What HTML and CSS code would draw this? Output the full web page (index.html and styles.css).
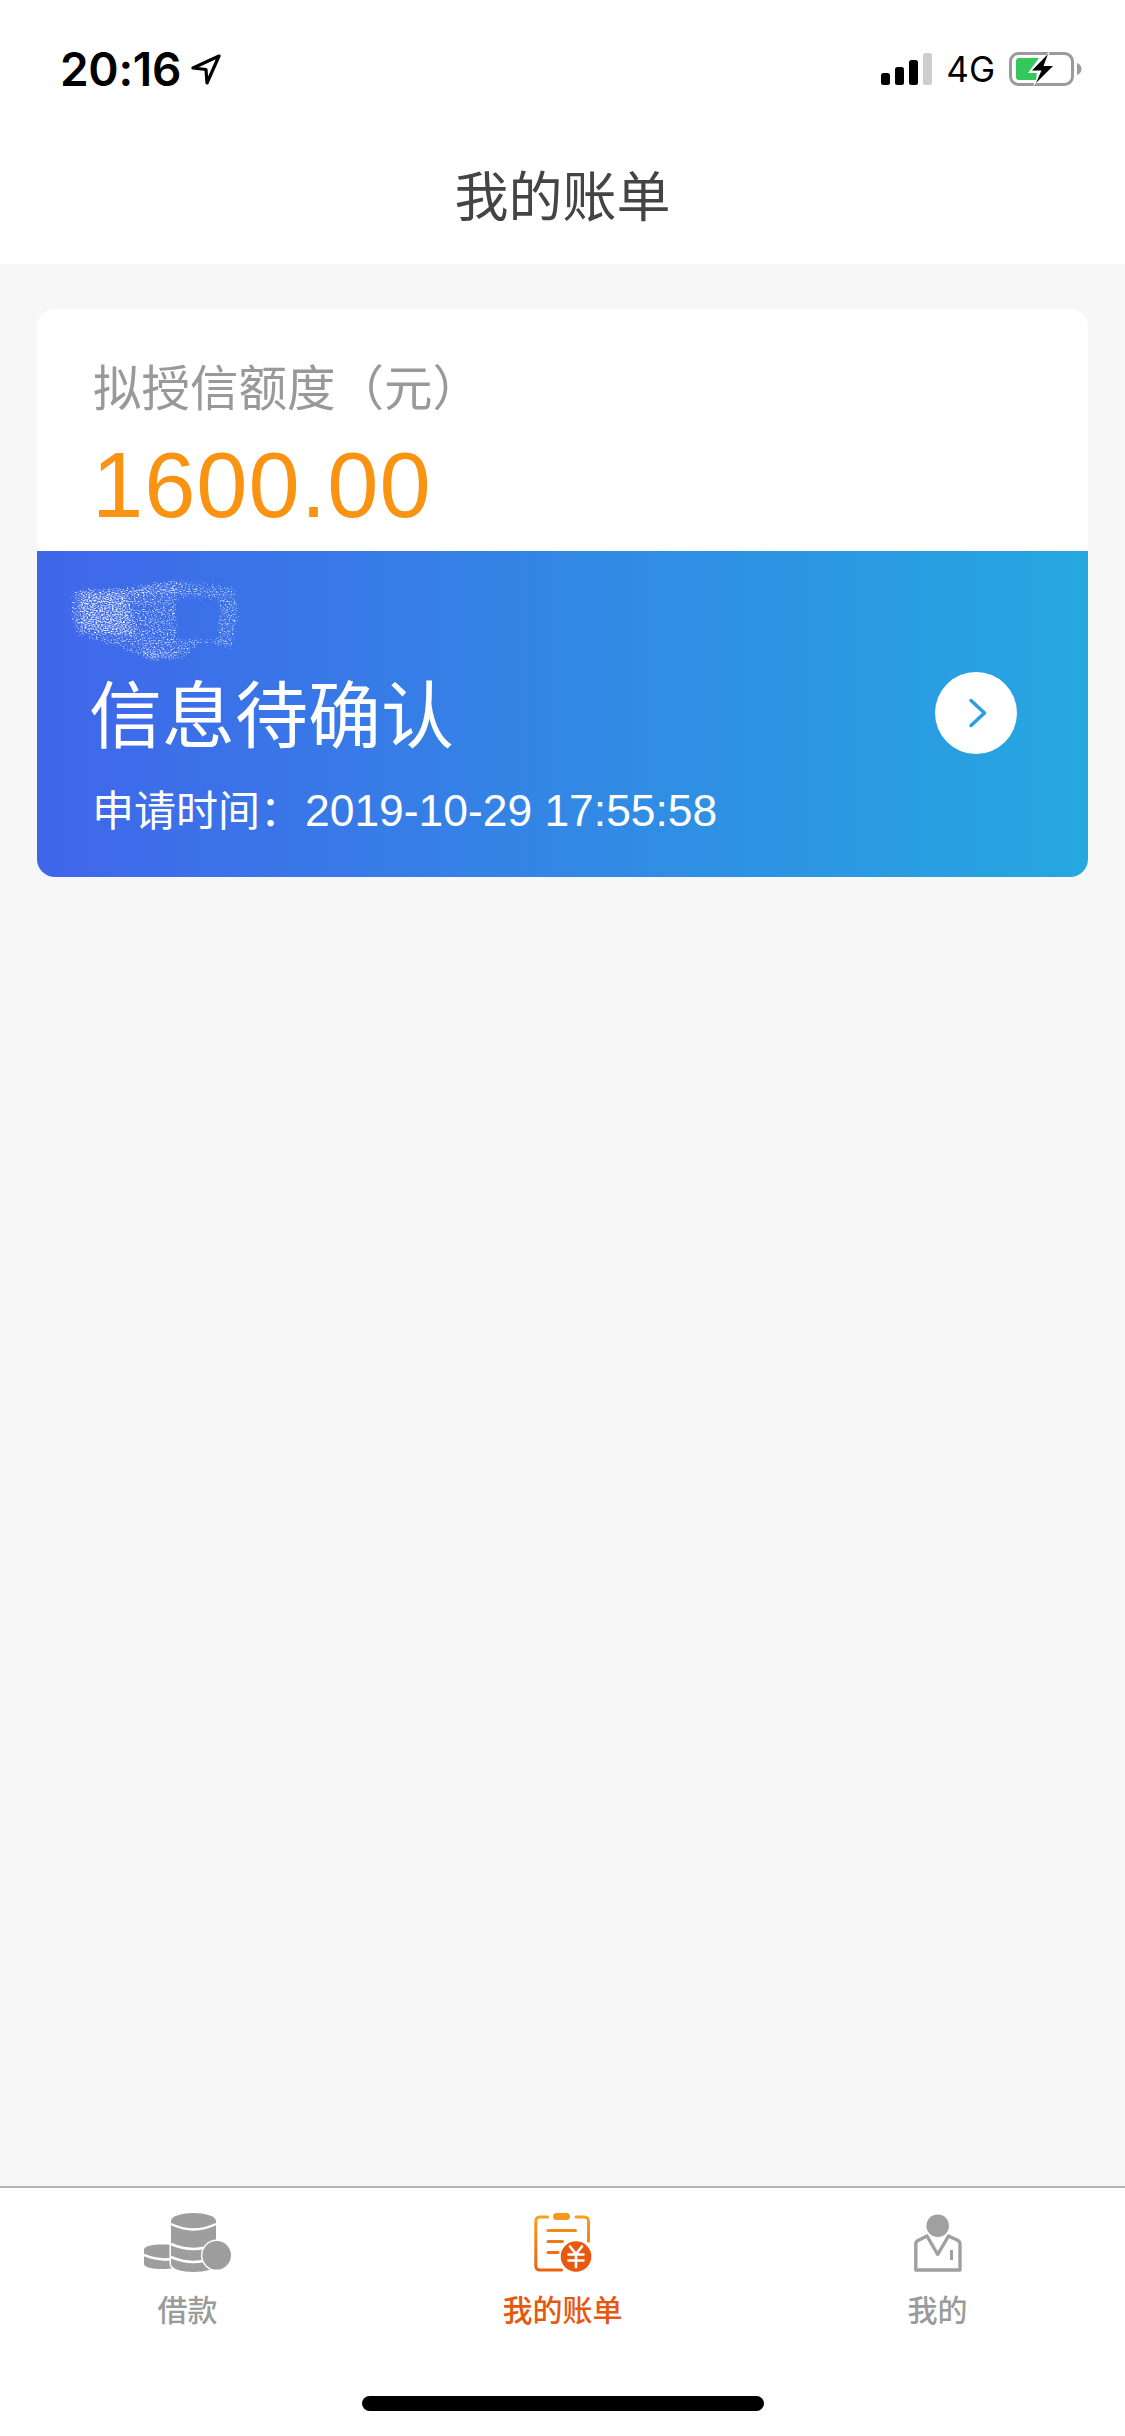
FILE: index.html
```html
<!DOCTYPE html>
<html lang="zh-CN">
<head>
<meta charset="utf-8">
<title>我的账单</title>
<link rel="stylesheet" href="styles.css">
</head>
<body>
<div class="app">
  <header class="top">
    <div class="status">
      <div class="status-left">
        <span class="clock">20:16</span>
        <svg class="loc" viewBox="0 0 30 32" width="30" height="32"><path d="M28 3 L2 15 L15 16.5 L16 30 Z" fill="none" stroke="#000" stroke-width="3.2" stroke-linejoin="round"/></svg>
      </div>
      <div class="status-right">
        <div class="signal"><i class="b1"></i><i class="b2"></i><i class="b3"></i><i class="b4"></i></div>
        <span class="net">4G</span>
        <svg class="battery" viewBox="0 0 73 34" width="73" height="34">
          <rect x="1.5" y="1.5" width="62" height="31" rx="8" fill="none" stroke="#9b9b9b" stroke-width="3"/>
          <path d="M68 11 C71 12 72.500 14.500 72.500 17 C72.500 19.500 71 22 68 23 Z" fill="#9b9b9b"/>
          <path d="M10 6 H30 L19 21 H27.500 V28 H10 A3 3 0 0 1 7 25 V9 A3 3 0 0 1 10 6 Z" fill="#34c759"/>
          <path d="M41 -1 L20 20 H30 L24 34 L47 13 H36 Z" fill="#fff"/>
          <path d="M39 2 L23 18.500 H32.500 L27 31 L44 14 H34.500 Z" fill="#000"/>
        </svg>
      </div>
    </div>
    <h1 class="title">我的账单</h1>
  </header>

  <main class="content">
    <section class="card">
      <div class="quota">
        <div class="quota-label">拟授信额度（元）</div>
        <div class="quota-value">1600.00</div>
      </div>
      <div class="state">
        <svg class="smudge" viewBox="0 0 175 86" width="175" height="86">
          <defs>
            <filter id="grain" x="0" y="0" width="100%" height="100%">
              <feGaussianBlur in="SourceGraphic" stdDeviation="2.5" result="mask"/>
              <feTurbulence type="fractalNoise" baseFrequency="0.55 0.9" numOctaves="3" seed="7" result="n"/>
              <feColorMatrix in="n" type="matrix" values="0 0 0 0 1  0 0 0 0 1  0 0 0 0 1  0 0 0 1 0" result="na"/>
              <feComposite in="na" in2="mask" operator="arithmetic" k1="0" k2="0.5" k3="0.5" k4="0" result="sum"/>
              <feColorMatrix in="sum" type="matrix" values="0 0 0 0 1  0 0 0 0 1  0 0 0 0 1  0 0 0 5 -2.7" result="g"/>
              <feGaussianBlur in="g" stdDeviation="0.4"/>
            </filter>
          </defs>
          <g filter="url(#grain)">
            <path fill-rule="evenodd" d="M4 10 L55 8 L105 1 L170 8 L174 38 L167 74 L135 68 L118 84 L80 85 L55 74 L8 60 L0 36 Z M112 24 L150 24 L148 60 L112 60 Z" fill="#fff" fill-opacity=".58"/>
            <path d="M12 16 L60 14 L64 40 L70 60 L12 52 Z" fill="#fff" fill-opacity=".3"/>
            <path d="M60 12 L108 5 L112 16 L66 20 Z" fill="#fff" fill-opacity=".2"/>
            <path d="M75 68 L105 76 L112 84 L78 84 Z" fill="#fff" fill-opacity=".2"/>
          </g>
        </svg>
        <div class="state-row">
          <div class="state-title">信息待确认</div>
          <div class="go">
            <svg viewBox="0 0 20 30" width="20" height="30"><path d="M3 2.500 L16.500 15 L3 27.500" fill="none" stroke="#2a9fdf" stroke-width="3.500" stroke-linecap="round" stroke-linejoin="round"/></svg>
          </div>
        </div>
        <div class="state-time"><span class="time-key">申请时间：</span><span class="time-val">2019-10-29 17:55:58</span></div>
      </div>
    </section>
  </main>

  <footer class="tabs">
    <nav class="tab-row">
      <a class="tab">
        <svg class="tab-icon" viewBox="0 0 88 59" width="88" height="59">
          <g fill="#9e9e9e">
            <path d="M0 37 C0 33 8 31.500 18 31.500 C28 31.500 36 33 36 37 V51 C36 54 28 56 18 56 C8 56 0 54 0 51 Z"/>
          </g>
          <path d="M0 42 Q14 48 27 46" fill="none" stroke="#fff" stroke-width="2.500"/>
          <path d="M27 8 C27 3 38 0 49.500 0 C61 0 72 3 72 8 V51 C72 56 61 59 49.500 59 C38 59 27 56 27 51 Z" fill="#9e9e9e" stroke="#fff" stroke-width="3" paint-order="stroke"/>
          <path d="M27 11 Q49.500 22 72 11 M27 31 Q49.500 41 72 31 M27 44 Q49.500 54 72 44" fill="none" stroke="#fff" stroke-width="2.500"/>
          <circle cx="72.700" cy="42.300" r="14.300" fill="#9e9e9e" stroke="#fff" stroke-width="3" paint-order="stroke"/>
        </svg>
        <span class="tab-label">借款</span>
      </a>
      <a class="tab tab-active">
        <svg class="tab-icon" viewBox="0 0 58 59" width="58" height="59">
          <defs>
            <linearGradient id="bill" x1="0" y1="0" x2="0" y2="1">
              <stop offset="0" stop-color="#f7a01b"/>
              <stop offset="1" stop-color="#e9610f"/>
            </linearGradient>
          </defs>
          <path d="M13.500 4 H6 Q1.800 4 1.800 8.500 V52.500 Q1.800 57 6 57 H27.500 M42 4 H50 Q54.500 4 54.500 8.500 V28" fill="none" stroke="url(#bill)" stroke-width="3" stroke-linecap="round" stroke-linejoin="round"/>
          <rect x="19" y="0" width="17" height="7" rx="3.500" fill="#f7981a"/>
          <path d="M14 17.500 H41.500" fill="none" stroke="#f08a1a" stroke-width="3" stroke-linecap="round"/>
          <path d="M14 28.500 H28.500" fill="none" stroke="#ee7c16" stroke-width="3" stroke-linecap="round"/>
          <path d="M14 39.500 H24" fill="none" stroke="#ec7113" stroke-width="3" stroke-linecap="round"/>
          <circle cx="42" cy="43.500" r="15.300" fill="#e8590f"/>
          <path d="M36 33.500 L42 41 L48 33.500 M34.500 41.500 H49.500 M34.500 47.500 H49.500 M42 41 V54" fill="none" stroke="#fff" stroke-width="2.600" stroke-linecap="round" stroke-linejoin="round"/>
        </svg>
        <span class="tab-label">我的账单</span>
      </a>
      <a class="tab">
        <svg class="tab-icon" viewBox="0 0 48 59" width="48" height="59">
          <circle cx="23.700" cy="12.700" r="11.300" fill="#a0a0a0"/>
          <path d="M13 23 L4 27.500 Q1.800 28.700 1.800 31 V57 H46 V31 Q46 28.700 44 27.500 L34.500 23 L23.700 41.500 Z" fill="none" stroke="#a0a0a0" stroke-width="3.400" stroke-linejoin="round"/>
          <path d="M37.500 37 V47" fill="none" stroke="#a0a0a0" stroke-width="3"/>
        </svg>
        <span class="tab-label">我的</span>
      </a>
    </nav>
    <div class="home-wrap"><div class="home"></div></div>
  </footer>
</div>
</body>
</html>
```

FILE: styles.css
```css
* { box-sizing: border-box; margin: 0; padding: 0; }
html, body { width: 1125px; height: 2436px; overflow: hidden; }
body { background: #f7f7f7; font-family: "Noto Sans CJK SC", "Liberation Sans", sans-serif; }

.app { display: flex; flex-direction: column; height: 2436px; }

.top { background: #fff; height: 264px; padding-top: 52px; }
.status { display: flex; justify-content: space-between; align-items: center; height: 34px; padding: 0 43px 0 60px; }
.status-left { display: flex; align-items: center; gap: 10px; }
.clock { font-family: Inter, "Liberation Sans", sans-serif; font-weight: 600; font-size: 46px; line-height: 34px; color: #000; letter-spacing: -0.3px; }
.loc { display: block; }
.status-right { display: flex; align-items: center; }
.signal { display: flex; align-items: flex-end; gap: 5px; height: 32px; }
.signal i { display: block; width: 9px; border-radius: 2.5px; background: #000; }
.signal .b1 { height: 12px; }
.signal .b2 { height: 18px; }
.signal .b3 { height: 25px; }
.signal .b4 { height: 32px; background: #cdcdcd; }
.net { font-family: Inter, "Liberation Sans", sans-serif; font-size: 35px; font-weight: 400; line-height: 34px; color: #000; margin-left: 14px; margin-right: 14px; }
.battery { display: block; overflow: visible; }

.title { font-size: 54px; font-weight: 400; line-height: 70px; color: #444; text-align: center; margin-top: 73px; }

.content { flex: 1; padding: 45px 37px 0; }
.card { border-radius: 18px; overflow: hidden; background: #fff; }
.quota { height: 242px; padding: 52px 56px 0; }
.quota-label { font-size: 48.500px; line-height: 48px; color: #999; }
.quota-value { font-family: "Liberation Sans", sans-serif; font-size: 92px; line-height: 90px; letter-spacing: 1px; color: #fa9312; margin-top: 31px; margin-left: -1px; }

.state { height: 326px; padding: 26px 71px 0 58px; background: linear-gradient(90deg, #4066ea 0%, #25a8e0 100%); color: #fff; }
.smudge { display: block; margin-left: -28px; }
.state-row { display: flex; justify-content: space-between; align-items: center; margin-top: 9px; height: 82px; }
.state-title { font-size: 73px; line-height: 72px; margin-left: -6px; margin-bottom: 6px; }
.go { width: 82px; height: 82px; border-radius: 50%; background: #fff; display: flex; align-items: center; justify-content: center; }
.go svg { display: block; margin-left: 4px; }
.state-time { display: flex; align-items: baseline; margin-top: 33px; margin-left: -3px; font-size: 42px; line-height: 42px; }
.time-val { font-family: "Liberation Sans", sans-serif; font-size: 44.400px; margin-left: 3px; }

.tabs { background: #fff; border-top: 2px solid #b4b4b4; height: 250px; }
.tab-row { display: grid; grid-template-columns: repeat(3, 375px); padding-top: 25px; }
.tab { display: flex; flex-direction: column; align-items: center; }
.tab-icon { display: block; }
.tab-label { font-size: 30px; font-weight: 500; line-height: 30px; color: #9b9b9b; margin-top: 21px; }
.tab-active .tab-label { color: #e5590f; }
.home-wrap { display: flex; justify-content: center; padding-top: 73px; }
.home { width: 402px; height: 15px; border-radius: 8px; background: #000; }
```
